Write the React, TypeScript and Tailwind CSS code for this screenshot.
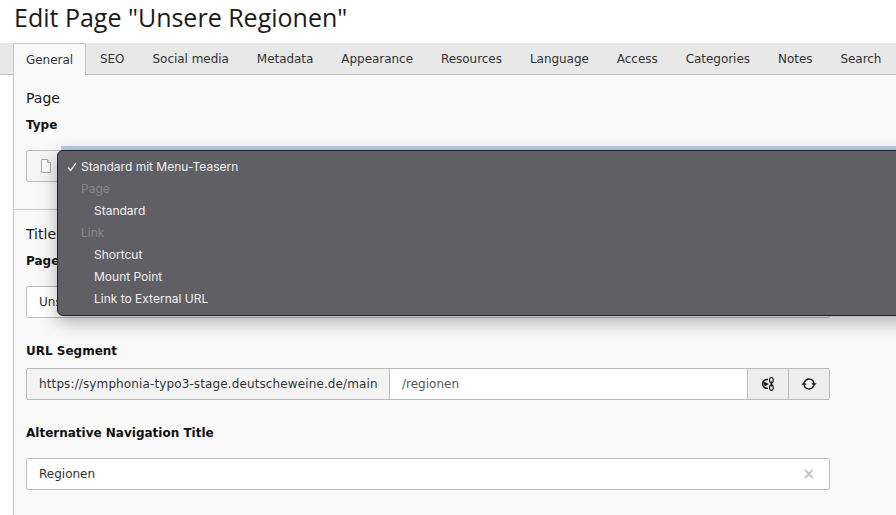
import React from 'react';

const tabs = ['SEO', 'Social media', 'Metadata', 'Appearance', 'Resources', 'Language', 'Access', 'Categories', 'Notes', 'Search'];

const FileIcon = () => (
  <svg width="16" height="16" viewBox="0 0 16 16" fill="none" stroke="#aaa" strokeWidth="1">
    <path d="M3.5 1.5h6l3 3v10h-9z" fill="#fbfbfb" />
    <path d="M9.5 1.5v3h3" fill="#ddd" />
  </svg>
);

const CheckIcon = () => (
  <svg width="10" height="10" viewBox="0 0 10 10" fill="none" stroke="#f0f0f0" strokeWidth="1.3">
    <path d="M1 5.6 3.6 8.4 8.8 1.4" />
  </svg>
);

const SlugIcon = () => (
  <svg width="16" height="16" viewBox="0 0 16 16" fill="none" stroke="#1a1a1a">
    <path d="M8 3.6A4.4 4.4 0 1 0 8 12.2" strokeWidth="1.6" />
    <path d="M3.6 5.4 9 8 4.6 10.6z" fill="#1a1a1a" stroke="none" />
    <rect x="9.6" y="1.7" width="3.6" height="5.2" rx="1.8" strokeWidth="1.2" />
    <rect x="9.6" y="9" width="3.6" height="5.4" rx="1.8" strokeWidth="1.2" />
    <path d="M11.4 5.5v5" strokeWidth="1.9" />
  </svg>
);

const RefreshIcon = () => (
  <svg width="16" height="16" viewBox="0 0 16 16" fill="none" stroke="#1a1a1a" strokeWidth="1.4">
    <path d="M3.4 6.2A5 5 0 0 1 13 7.6" />
    <path d="M12.6 9.8A5 5 0 0 1 3 8.4" />
    <path d="M10.4 7.2h5.2L13 10.2z" fill="#1a1a1a" stroke="none" />
    <path d="M0.4 8.8h5.2L3 5.8z" fill="#1a1a1a" stroke="none" />
  </svg>
);

export default function App() {
  return (
    <div className="relative h-[515px] w-[896px] overflow-hidden bg-white font-['DejaVu_Sans',sans-serif] text-[12px] text-[#333]">
      <h1 className="h-[43px] pl-[14px] font-['Open_Sans',sans-serif] text-[25px] leading-[34px] text-[#1a1a1a]">
        Edit Page "Unsere Regionen"
      </h1>

      <div className="flex h-[32px] border-b border-[#c3c3c3] bg-[#e8e8e8] pl-[13px] tracking-[-0.04px]">
        <div className="z-10 flex h-[32px] w-[73px] items-center justify-center rounded-t-[2px] border border-b-0 border-[#c3c3c3] bg-[#f9f9f9]">
          General
        </div>
        {tabs.map((t) => (
          <div key={t} className="flex h-[31px] items-center px-[14px] whitespace-nowrap">
            {t}
          </div>
        ))}
      </div>

      <div className="ml-[13px] h-[440px] border-l border-[#c3c3c3] bg-[#f9f9f9]">
        <div className="h-[135px] border-b border-[#c9c9c9] pl-[12px] pt-[14px]">
          <div className="text-[14px] leading-[18px] text-[#1a1a1a]">Page</div>
          <div className="mt-[11px] text-[12px] font-bold leading-[14px] text-[#111]">Type</div>
          <div className="mt-[18px] flex h-[32px] w-[804px] items-center rounded-[2px] border border-[#bbb] bg-[#f5f5f5] pl-[11px]">
            <FileIcon />
          </div>
        </div>

        <div className="pl-[12px] pt-[15px]">
          <div className="text-[14px] leading-[18px] text-[#1a1a1a]">Title</div>
          <div className="mt-[11px] text-[12px] font-bold leading-[14px] text-[#111]">Page Title</div>
          <div className="mt-[18px] flex h-[32px] w-[804px] items-center rounded-[2px] border border-[#bbb] bg-white pl-[12px]">
            Unsere Regionen
          </div>

          <div className="mt-[26px] text-[12px] font-bold leading-[14px] text-[#111]">URL Segment</div>
          <div className="mt-[10px] flex h-[32px] w-[804px] rounded-[2px] border border-[#bbb] bg-white">
            <div className="flex w-[363px] items-center border-r border-[#bbb] bg-[#f3f3f3] pl-[12px] tracking-[0.12px] whitespace-nowrap">
              https://symphonia-typo3-stage.deutscheweine.de/main
            </div>
            <div className="flex flex-1 items-center pl-[12px] text-[#555]">/regionen</div>
            <div className="flex w-[41px] items-center justify-center border-l border-[#bbb] bg-[#eeeeee]">
              <SlugIcon />
            </div>
            <div className="flex w-[41px] items-center justify-center border-l border-[#bbb] bg-[#eeeeee]">
              <RefreshIcon />
            </div>
          </div>

          <div className="mt-[26px] text-[12px] font-bold leading-[14px] text-[#111]">Alternative Navigation Title</div>
          <div className="mt-[18px] flex h-[32px] w-[804px] items-center justify-between rounded-[2px] border border-[#bbb] bg-white pl-[12px] pr-[14px]">
            <span>Regionen</span>
            <span className="text-[15px] font-bold leading-none text-[#c4c4c4]">×</span>
          </div>
        </div>
      </div>

      <div className="absolute left-[61px] right-0 top-[146px] h-[4px] bg-[#b5cce6]" />
      <div className="absolute left-[57px] right-[-20px] top-[150px] h-[166px] rounded-[6px] border border-[#222] bg-[#605f64] py-[5px] font-['Inter',sans-serif] text-[12px] leading-[22px] text-[#f0f0f0] shadow-[0_6px_18px_rgba(0,0,0,0.3)]">
        <div className="relative pl-[23px]">
          <span className="absolute left-[9px] top-[6px]">
            <CheckIcon />
          </span>
          Standard mit Menu-Teasern
        </div>
        <div className="pl-[23px] text-[#87868a]">Page</div>
        <div className="pl-[36px]">Standard</div>
        <div className="pl-[23px] text-[#87868a]">Link</div>
        <div className="pl-[36px]">Shortcut</div>
        <div className="pl-[36px]">Mount Point</div>
        <div className="pl-[36px]">Link to External URL</div>
      </div>
    </div>
  );
}
